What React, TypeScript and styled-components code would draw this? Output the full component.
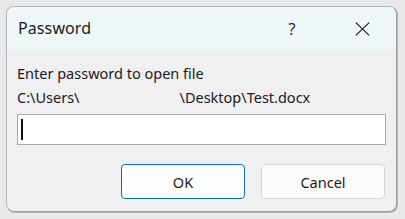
import React from 'react';
import styled, { createGlobalStyle } from 'styled-components';

/* ─────────────────────────── global ─────────────────────────── */
const GlobalStyle = createGlobalStyle`
  html, body {
    margin: 0;
    padding: 0;
    background: #e8e8e8;
  }
  body {
    font-family: "Noto Sans", "Open Sans", "Liberation Sans", sans-serif;
    color: #1b1b1b;
  }
`;

/* ─────────────────────────── styled components ─────────────────────────── */
const Desktop = styled.div`
  width: 405px;
  height: 219px;
  padding: 6px 0 0 6px;
  box-sizing: border-box;
`;

const Window = styled.div`
  width: 391px;
  height: 206px;
  box-sizing: border-box;
  border: 1px solid #b4b4b4;
  border-right-color: #9c9c9c;
  border-bottom-color: #9c9c9c;
  border-radius: 8px;
  overflow: hidden;
  background: #f0eff1;
  box-shadow: 1px 1px 0 #b8b8b8;
  display: flex;
  flex-direction: column;
`;

const TitleBar = styled.div`
  height: 43px;
  flex: none;
  background: #eef6f8;
  display: flex;
  align-items: center;
  padding: 0 9px 0 11px;
`;

const Title = styled.span`
  flex: 1;
  font-size: 16px;
  letter-spacing: 0.1px;
  margin-top: -1px;
`;

const TitleButton = styled.div<{ $w: number; $gap?: number }>`
  width: ${p => p.$w}px;
  margin-left: ${p => p.$gap ?? 0}px;
  height: 43px;
  display: flex;
  align-items: center;
  justify-content: center;
  font-size: 17px;
  font-family: "Open Sans", "Noto Sans", sans-serif;
  color: #222;
`;

const Body = styled.div`
  flex: 1;
  padding: 11px 10px 12px 10px;
  display: flex;
  flex-direction: column;
`;

const Line = styled.div`
  font-size: 14.5px;
  line-height: 24px;
  white-space: pre;
`;

const Redacted = styled.span`
  display: inline-block;
  width: 100px;
`;

const Field = styled.div`
  margin-top: 5px;
  height: 31px;
  box-sizing: border-box;
  border: 1px solid #ababab;
  background: #ffffff;
  display: flex;
  align-items: center;
  padding-left: 3px;
`;

const Caret = styled.div`
  width: 2px;
  height: 21px;
  background: #111;
`;

const ButtonRow = styled.div`
  margin-top: 19px;
  display: flex;
  justify-content: flex-end;
  gap: 16px;
  padding-right: 1px;
`;

const Button = styled.div<{ $primary?: boolean }>`
  width: 124px;
  height: 35px;
  box-sizing: border-box;
  border-radius: 4px;
  border: 1px solid ${p => (p.$primary ? '#0f6cbd' : '#d6d6d6')};
  background: ${p => (p.$primary ? '#fdfdfd' : '#fbfbfb')};
  display: flex;
  align-items: center;
  justify-content: center;
  font-size: 14.5px;
  color: #1b1b1b;
`;

/* ─────────────────────────── component ─────────────────────────── */
const CloseIcon = () => (
  <svg width="15" height="14" viewBox="0 0 15 14">
    <path d="M0.8 0.6 L14.2 13.4 M14.2 0.6 L0.8 13.4" stroke="#1e1e1e" strokeWidth="1.2" fill="none" />
  </svg>
);

const App: React.FC = () => (
  <>
    <GlobalStyle />
    <Desktop>
      <Window>
        <TitleBar>
          <Title>Password</Title>
          <TitleButton $w={18}>?</TitleButton>
          <TitleButton $w={50} $gap={36}>
            <CloseIcon />
          </TitleButton>
        </TitleBar>
        <Body>
          <Line>Enter password to open file</Line>
          <Line>
            {'C:\\Users\\'}
            <Redacted />
            {'\\Desktop\\Test.docx'}
          </Line>
          <Field>
            <Caret />
          </Field>
          <ButtonRow>
            <Button $primary>OK</Button>
            <Button>Cancel</Button>
          </ButtonRow>
        </Body>
      </Window>
    </Desktop>
  </>
);

export default App;
